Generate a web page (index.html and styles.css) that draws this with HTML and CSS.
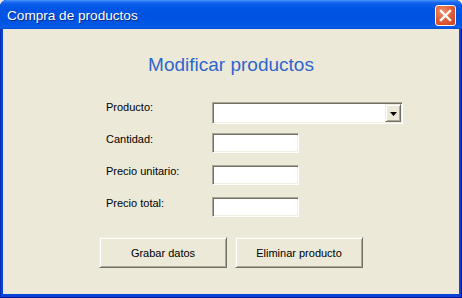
FILE: index.html
```html
<!DOCTYPE html>
<html lang="es">
<head>
<meta charset="utf-8">
<title>Compra de productos</title>
<link rel="stylesheet" href="styles.css">
</head>
<body>
<div class="window">
  <div class="titlebar">
    <span class="title">Compra de productos</span>
    <div class="close">
      <svg width="13" height="13" viewBox="0 0 13 13"><path d="M2 2 L11 11 M11 2 L2 11" stroke="#fff" stroke-width="2.4" stroke-linecap="square"/></svg>
    </div>
  </div>
  <div class="client">
    <h1 class="heading">Modificar productos</h1>
    <div class="form">
      <div class="row row-first">
        <span class="lbl">Producto:</span>
        <div class="combo">
          <div class="combo-field"></div>
          <div class="combo-btn"><svg width="7" height="4" viewBox="0 0 7 4"><path d="M0 0 H7 L3.5 4 Z" fill="#000"/></svg></div>
        </div>
      </div>
      <div class="row">
        <span class="lbl">Cantidad:</span>
        <div class="tb"></div>
      </div>
      <div class="row">
        <span class="lbl">Precio unitario:</span>
        <div class="tb"></div>
      </div>
      <div class="row">
        <span class="lbl">Precio total:</span>
        <div class="tb"></div>
      </div>
    </div>
    <div class="actions">
      <button class="btn">Grabar datos</button>
      <button class="btn">Eliminar producto</button>
    </div>
  </div>
</div>
</body>
</html>
```
FILE: styles.css
```css
* { box-sizing: border-box; }
html, body { margin: 0; padding: 0; }
body {
  width: 462px;
  height: 298px;
  overflow: hidden;
  font-family: "Liberation Sans", Arial, sans-serif;
  background: #ece9d8;
}
.window {
  width: 462px;
  height: 298px;
  display: flex;
  flex-direction: column;
  background: #0843dc;
  border-radius: 7px 7px 0 0;
  padding: 0 3px 4px 3px;
  box-shadow: inset 0 -1px 0 #00138c, inset 1px 0 0 #0831b8, inset -1px 0 0 #00138c;
}
.titlebar {
  height: 29px;
  margin: 0 -3px;
  padding: 0 6px 0 7px;
  display: flex;
  align-items: flex-start;
  justify-content: space-between;
  border-radius: 7px 7px 0 0;
  background: linear-gradient(#4a97fb 0, #1f6ef5 2px, #0a5de9 4px, #0055e5 9px, #0052e0 20px, #0058e6 25px, #0a5fe9 27px, #0049d8 29px);
}
.title {
  color: #fff;
  font-size: 13.6px;
  line-height: 16px;
  padding-top: 8px;
  text-shadow: 1px 1px 0 #0a2a8a;
}
.close {
  width: 21px;
  height: 21px;
  margin-top: 5px;
  border: 1px solid #fff;
  border-radius: 3px;
  background: radial-gradient(circle at 35% 30%, #f0906c 0, #e2613a 45%, #c8401c 100%);
  display: flex;
  align-items: center;
  justify-content: center;
}
.client {
  flex: 1;
  background: #ece9d8;
  padding: 25px 0 0 0;
}
.heading {
  margin: 0;
  text-align: center;
  font-weight: normal;
  font-size: 19px;
  line-height: 22px;
  color: #2f66cc;
}
.form {
  margin-top: 26px;
  padding-left: 103px;
  display: flex;
  flex-direction: column;
  gap: 12px;
}
.row {
  display: flex;
  align-items: flex-start;
}
.row-first { margin-bottom: -3px; }
.lbl {
  width: 106px;
  font-size: 11px;
  line-height: 13px;
  color: #000;
}
.row-first .lbl { margin-top: -1px; }
.tb {
  width: 87px;
  height: 20px;
  background: #fff;
  border: 1px solid;
  border-color: #aca899 #fff #fff #aca899;
  box-shadow: inset 1px 1px 0 #716f64, inset -1px -1px 0 #f1efe2;
}
.combo {
  width: 191px;
  height: 22px;
  display: flex;
  background: #fff;
  border: 1px solid;
  border-color: #aca899 #fff #fff #aca899;
  box-shadow: inset 1px 1px 0 #716f64, inset -1px -1px 0 #f1efe2;
  padding: 1px;
}
.combo-field { flex: 1; }
.combo-btn {
  width: 16px;
  height: 18px;
  background: #ece9d8;
  border: 1px solid;
  border-color: #f1efe2 #716f64 #716f64 #f1efe2;
  box-shadow: inset 1px 1px 0 #fff, inset -1px -1px 0 #aca899;
  display: flex;
  align-items: center;
  justify-content: center;
  padding-top: 1px;
}
.actions {
  margin-top: 20px;
  padding-left: 96px;
  display: flex;
  gap: 8px;
}
.btn {
  width: 128px;
  height: 31px;
  margin: 0;
  padding: 0;
  font-family: "Liberation Sans", Arial, sans-serif;
  font-size: 11px;
  color: #000;
  background: #ece9d8;
  border: 1px solid;
  border-color: #f1efe2 #716f64 #716f64 #f1efe2;
  box-shadow: inset 1px 1px 0 #fff, inset -1px -1px 0 #aca899;
  border-radius: 0;
}
```
